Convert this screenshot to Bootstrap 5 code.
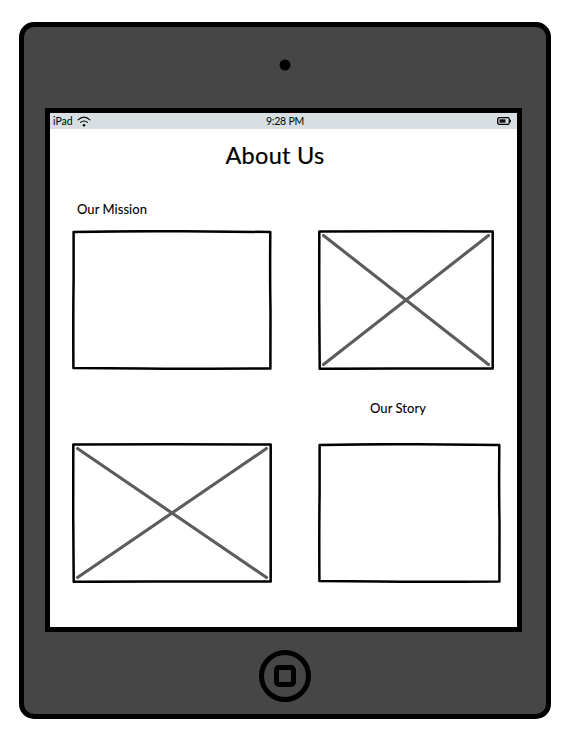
<!DOCTYPE html>
<html lang="en">
<head>
<meta charset="utf-8">
<meta name="viewport" content="width=device-width, initial-scale=1">
<title>About Us</title>
<link href="https://cdn.jsdelivr.net/npm/bootstrap@5.3.0/dist/css/bootstrap.min.css" rel="stylesheet">
<style>
body{font-family:Lato,"Open Sans",sans-serif;color:#000;overflow:hidden}
.tablet{width:532px;height:697px;margin:22px 0 0 19px;background:#464646;border:5px solid #000;border-radius:15px}
.camera-bar{height:81px}
.screen{width:477px;height:524px;margin-left:21px;border:5px solid #000}
.status{height:16px;background:#d7dfe2;font-size:10.5px;line-height:15px;padding:0 6px 0 3px}
.status>*{flex:1 1 0}
.clock{letter-spacing:-.2px;padding-left:6px}
.content{padding:13px 0 0 22px}
.title{font-size:23.5px;line-height:26px;letter-spacing:.3px;width:406px;font-weight:400;-webkit-text-stroke:.2px #000}
.label{font-size:13px;line-height:20px;font-weight:400;letter-spacing:.05px;-webkit-text-stroke:.1px #000}
.mission{margin:31px 0 11px 5px}
.story{margin:28px 0 25px 298px}
.boxes{gap:46px;height:140px}
svg{display:block;flex:none;fill:none;stroke:#000}
.edge{stroke-width:2.5;stroke-linejoin:round}
.cross{stroke:#5c5c5c;stroke-width:3.1;stroke-linecap:round}
.home-bar{height:86px;padding:18px 0 0 235px}
</style>
<script src="https://cdn.jsdelivr.net/npm/bootstrap@5.3.0/dist/js/bootstrap.bundle.min.js"></script>
</head>
<body class="bg-white">
<div class="tablet">
  <div class="camera-bar">
    <svg width="522" height="81"><circle cx="261" cy="38" r="5.5" fill="#000" stroke="none"/></svg>
  </div>
  <main class="screen bg-white">
    <div class="status d-flex align-items-center">
      <div class="d-flex align-items-center gap-1"><span>iPad</span>
        <svg width="16" height="12" viewBox="0 0 16 12" stroke-width="1.1" stroke-linecap="round"><path d="M1 4.8Q7 -.6 13 4.8M3.6 7.4Q7 4.6 10.4 7.4"/><circle cx="7" cy="10.3" r="1.2" fill="#000" stroke="none"/></svg>
      </div>
      <div class="clock text-center">9:28 PM</div>
      <div class="d-flex justify-content-end">
        <svg width="14" height="8" viewBox="0 0 14 8"><rect x=".7" y=".7" width="11.6" height="6.6" rx="1.6" stroke-width="1.3"/><path d="M13.3 2.7v2.6" stroke-width="1.2"/><rect x="2.5" y="2.3" width="6" height="3.4" fill="#111" stroke="none"/></svg>
      </div>
    </div>
    <div class="content">
      <h1 class="title text-center mb-0">About Us</h1>
      <h2 class="label mission">Our Mission</h2>
      <div class="boxes d-flex">
        <svg width="200" height="140"><path class="edge" d="M1.6 1.9Q60 1 110 1.3T198.3 2Q197.9 50 198.5 80L198.4 138.5Q110 138.9 70 138.5T1.4 137.9Q1.1 85 1.6 50Z"/></svg>
        <svg width="176" height="140"><path class="edge" d="M1.3 1.5L88 1.3L174.7 1.5V138.5L80 138.6L1.7 138.8L1.2 70Z"/><path class="cross" d="M5.5 5.5L170.5 134.5M170.5 5.5L5.5 134.5"/></svg>
      </div>
      <h2 class="label story">Our Story</h2>
      <div class="boxes d-flex">
        <svg width="200" height="140"><path class="edge" d="M1.3 1.5L100 1.3L198.7 1.5V138.5L80 138.6L1.7 138.8L1.2 70Z"/><path class="cross" d="M5.5 5.5L194.5 134.5M194.5 5.5L5.5 134.5"/></svg>
        <svg width="183" height="140"><path class="edge" d="M1.6 1.9Q60 1 100 1.3T181.3 2Q180.9 50 181.5 80L181.4 138.5Q100 138.9 60 138.5T1.4 137.9Q1.1 85 1.6 50Z"/></svg>
      </div>
    </div>
  </main>
  <div class="home-bar">
    <svg width="52" height="52" viewBox="0 0 52 52" stroke-width="5"><circle cx="26" cy="26" r="23.5"/><rect x="17.5" y="17.5" width="17" height="17" rx="2.5"/></svg>
  </div>
</div>
</body>
</html>
